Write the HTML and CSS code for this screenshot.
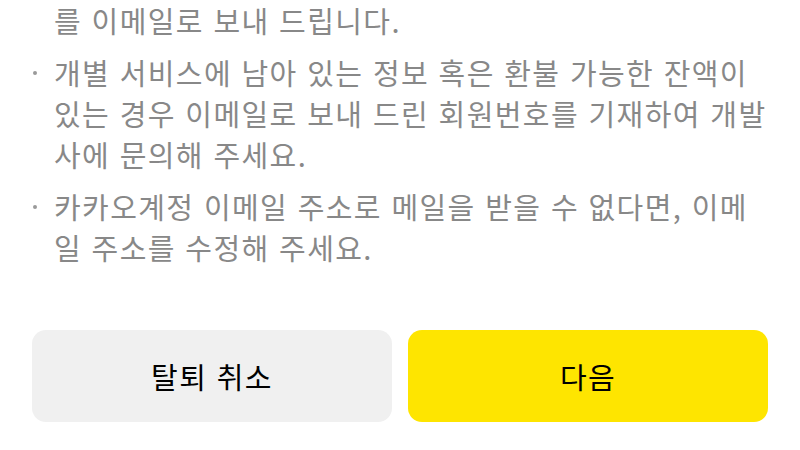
FILE: index.html
```html
<!DOCTYPE html>
<html lang="ko">
<head>
<meta charset="utf-8">
<title>카카오계정 탈퇴</title>
<link rel="stylesheet" href="styles.css">
</head>
<body>
<main class="page">
  <ul class="notice-list">
    <li class="notice-item notice-item--cont">
      <span class="notice-bullet"></span>
      <span class="notice-text">를 이메일로 보내 드립니다.</span>
    </li>
    <li class="notice-item">
      <span class="notice-bullet"><i class="dot"></i></span>
      <span class="notice-text">개별 서비스에 남아 있는 정보 혹은 환불 가능한 잔액이 있는 경우 이메일로 보내 드린 회원번호를 기재하여 개발사에 문의해 주세요.</span>
    </li>
    <li class="notice-item">
      <span class="notice-bullet"><i class="dot"></i></span>
      <span class="notice-text">카카오계정 이메일 주소로 메일을 받을 수 없다면, 이메일 주소를 수정해 주세요.</span>
    </li>
  </ul>
  <div class="actions">
    <button class="btn btn--cancel" type="button">탈퇴 취소</button>
    <button class="btn btn--next" type="button">다음</button>
  </div>
</main>
</body>
</html>
```
FILE: styles.css
```css
html, body {
  margin: 0;
  padding: 0;
  background: #ffffff;
}

body {
  font-family: "Noto Sans CJK KR", "Noto Sans", "Liberation Sans", sans-serif;
  width: 800px;
  height: 450px;
  overflow: hidden;
}

.page {
  padding: 0 32px;
  display: flex;
  flex-direction: column;
}

.notice-list {
  list-style: none;
  margin: 0;
  padding: 0;
  display: flex;
  flex-direction: column;
  gap: 11px;
}

.notice-item {
  display: grid;
  grid-template-columns: 22px 1fr;
  font-size: 29px;
  line-height: 41px;
  letter-spacing: 1.4px;
  color: #888888;
}

.notice-bullet {
  height: 41px;
  display: flex;
  align-items: center;
}

.dot {
  display: block;
  width: 4px;
  height: 4px;
  margin-left: 1px;
  border-radius: 50%;
  background: #9a9a9a;
}

.notice-text {
  word-break: normal;
}

.actions {
  margin-top: 62px;
  display: grid;
  grid-template-columns: 1fr 1fr;
  gap: 16px;
}

.btn {
  height: 92px;
  border: 0;
  border-radius: 14px;
  font-family: "Noto Sans CJK KR", "Noto Sans", "Liberation Sans", sans-serif;
  font-size: 29px;
  letter-spacing: 1.4px;
  color: #000000;
  padding: 0;
  cursor: pointer;
}

.btn--cancel {
  background: #f0f0f0;
}

.btn--next {
  background: #fee500;
}
```
